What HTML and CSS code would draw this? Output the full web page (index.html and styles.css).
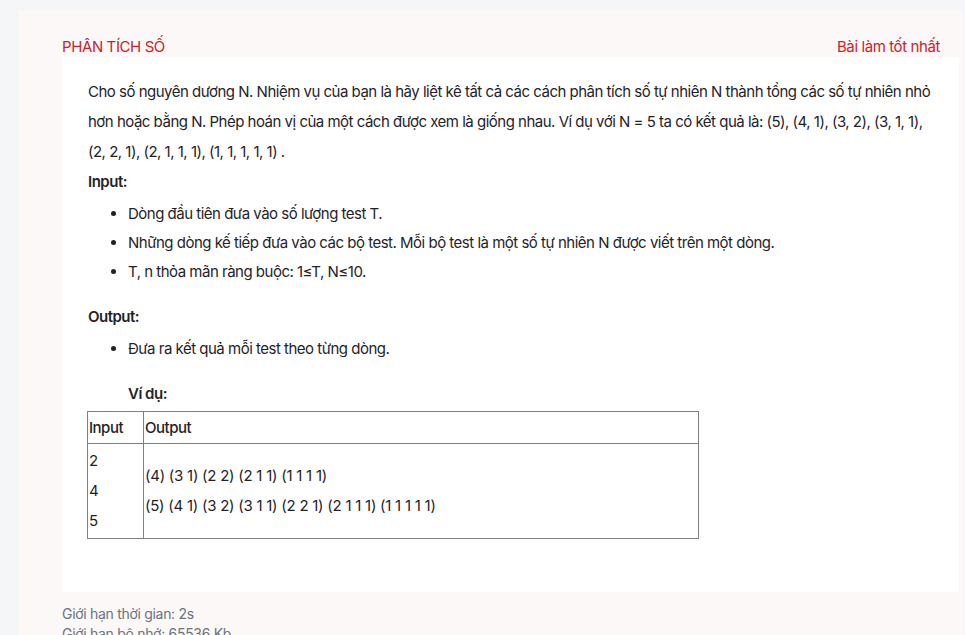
FILE: index.html
```html
<!DOCTYPE html>
<html lang="vi">
<head>
<meta charset="utf-8">
<title>PHÂN TÍCH SỐ</title>
<link rel="stylesheet" href="styles.css">
</head>
<body>
<div class="card">
  <div class="card-head">
    <span class="title">PHÂN TÍCH SỐ</span>
    <span class="best">Bài làm tốt nhất</span>
  </div>
  <div class="content">
    <p class="para">Cho số nguyên dương N. Nhiệm vụ của bạn là hãy liệt kê tất cả các cách phân tích số tự nhiên N thành tổng các số tự nhiên nhỏ hơn hoặc bằng N. Phép hoán vị của một cách được xem là giống nhau. Ví dụ với N = 5 ta có kết quả là: (5), (4, 1), (3, 2), (3, 1, 1), (2, 2, 1), (2, 1, 1, 1), (1, 1, 1, 1, 1) .</p>
    <p class="head">Input:</p>
    <ul class="list">
      <li>Dòng đầu tiên đưa vào số lượng test T.</li>
      <li>Những dòng kế tiếp đưa vào các bộ test. Mỗi bộ test là một số tự nhiên N được viết trên một dòng.</li>
      <li>T, n thỏa mãn ràng buộc: 1≤T, N≤10.</li>
    </ul>
    <p class="head head-out">Output:</p>
    <ul class="list">
      <li>Đưa ra kết quả mỗi test theo từng dòng.</li>
    </ul>
    <p class="example">Ví dụ:</p>
    <table class="sample">
      <tr class="row-head">
        <th class="col-in">Input</th>
        <th>Output</th>
      </tr>
      <tr class="row-body">
        <td class="col-in"><div>2</div><div>4</div><div>5</div></td>
        <td><div>(4) (3 1) (2 2) (2 1 1) (1 1 1 1)</div><div>(5) (4 1) (3 2) (3 1 1) (2 2 1) (2 1 1 1) (1 1 1 1 1)</div></td>
      </tr>
    </table>
  </div>
  <div class="footer">
    <div>Giới hạn thời gian: 2s</div>
    <div>Giới hạn bộ nhớ: 65536 Kb</div>
  </div>
</div>
</body>
</html>
```

FILE: styles.css
```css
html, body {
  margin: 0;
  padding: 0;
}
body {
  background: #f5f6f8;
  font-family: Inter, "Noto Sans", sans-serif;
  letter-spacing: -0.5px;
  color: #1f2328;
  height: 635px;
  overflow: hidden;
}
.card {
  margin: 10px 2px 0 19px;
  background: #fcf8f8;
  padding: 27px 4px 0 43px;
  height: 700px;
}
.card-head {
  display: flex;
  justify-content: space-between;
  padding-right: 19px;
  font-size: 15px;
  line-height: 20px;
  color: #c8232c;
  letter-spacing: -0.4px;
}
.content {
  background: #fff;
  padding: 20px 26px 0 26px;
  height: 515px;
  font-size: 15px;
}
.para {
  margin: 0;
  line-height: 30px;
}
.head {
  margin: 0;
  font-weight: 600;
  line-height: 30px;
}
.head-out {
  margin-top: 16px;
}
.list {
  margin: 2px 0 0 0;
  padding-left: 40px;
}
.list li {
  line-height: 29px;
}
.example {
  margin: 16px 0 0 40px;
  font-weight: 600;
  line-height: 30px;
}
.sample {
  border-collapse: collapse;
  width: 612px;
  margin: 2px 0 0 -1px;
  font-size: 15px;
}
.sample th, .sample td {
  border: 1px solid #808080;
  padding: 0 1px;
  text-align: left;
}
.sample th {
  font-weight: 500;
  height: 31px;
}
.col-in {
  width: 53px;
}
.row-body td {
  height: 94px;
  vertical-align: middle;
  font-size: 15px;
  letter-spacing: -0.25px;
}
.row-body td div {
  line-height: 30px;
}
.footer {
  padding-top: 12px;
  font-size: 14px;
  line-height: 20px;
  color: #6b7280;
  letter-spacing: -0.3px;
}
```
